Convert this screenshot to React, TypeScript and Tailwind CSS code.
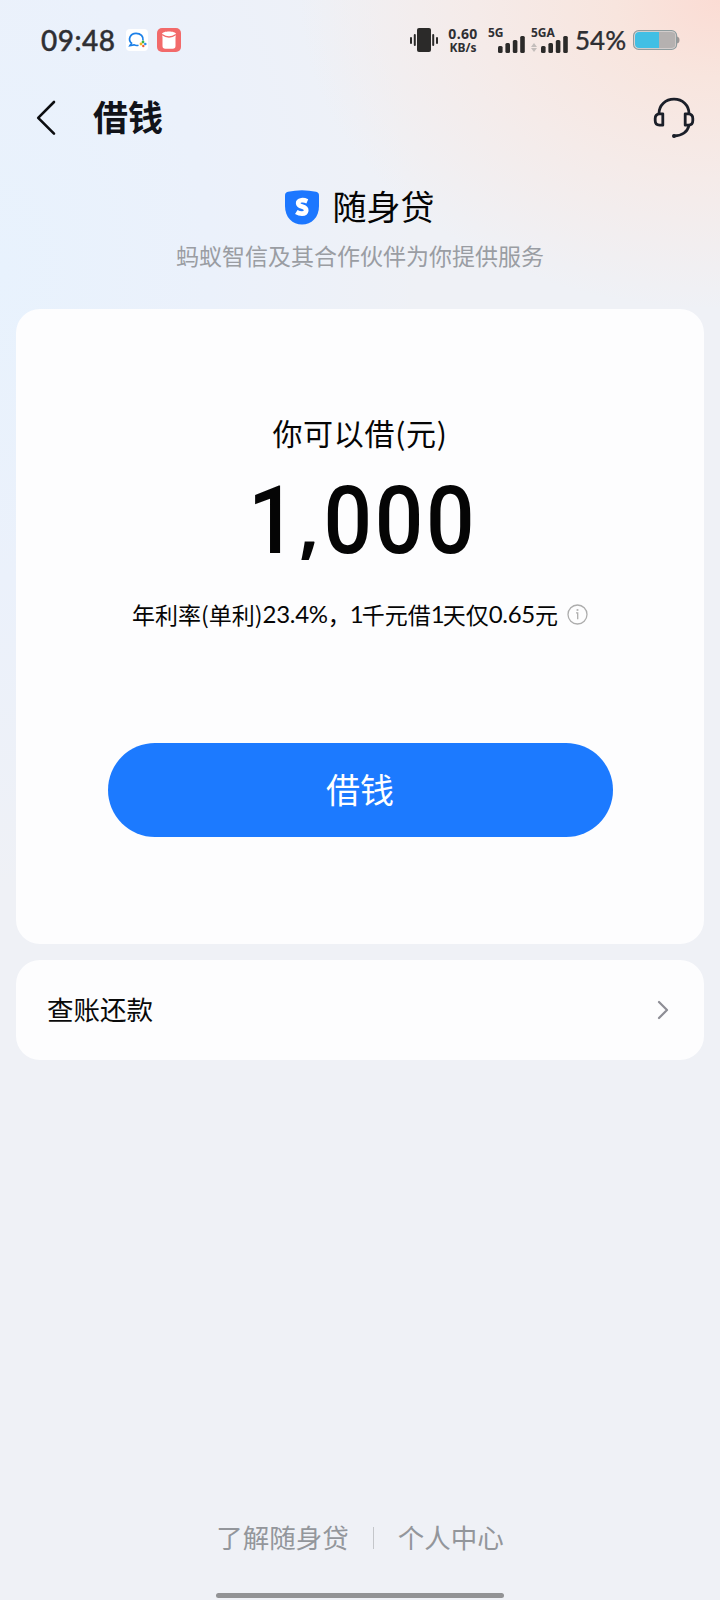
import React from "react";

function Signal() {
  return (
    <svg width="28" height="17" viewBox="0 0 28 17" fill="#2b2a29">
      <rect x="0" y="10" width="4.6" height="7" rx="1.5" />
      <rect x="7.4" y="7" width="4.6" height="10" rx="1.5" />
      <rect x="14.8" y="4" width="4.6" height="13" rx="1.5" />
      <rect x="22.2" y="0" width="4.6" height="17" rx="1.5" />
    </svg>
  );
}

function StatusBar() {
  return (
    <div className="flex h-20 items-center pl-[41px] font-['Lato',sans-serif] text-[#2f2f33]">
      <div className="w-[75px] text-[28px] font-medium leading-none tracking-[0.5px] [-webkit-text-stroke:0.4px_#2f2f33]">09:48</div>
      <svg className="ml-[10px]" width="22" height="22" viewBox="0 0 22 22">
        <rect width="22" height="22" rx="4" fill="#fff" />
        <path d="M12.500 16.200c-1.600.5-3.200.3-4.600-.4L4 16.600l1.500-2.400C1.500 10.500 4.200 4.300 10 4.300c4.800 0 7.600 3.300 7 7" fill="none" stroke="#1c80e8" strokeWidth="1.700" />
        <circle cx="17" cy="13" r="1.400" fill="#37b44a" />
        <circle cx="19.300" cy="15" r="1.300" fill="#2a8cf0" />
        <circle cx="15" cy="15" r="1.400" fill="#f3b51e" />
        <circle cx="17.300" cy="17" r="1.200" fill="#ef5a32" />
      </svg>
      <svg className="ml-[9px]" width="24" height="24" viewBox="0 0 24 24">
        <rect width="24" height="24" rx="5" fill="#f26a6a" />
        <path d="M5 6C5 2.500 19 2.500 19 6L18.500 9.500v8.500q0 2.800-2.800 2.800H8.300Q5.500 20.800 5.500 18v-8.500z" fill="#fff" />
        <path d="M5 6.500q7 5 14 0" fill="none" stroke="#f26a6a" strokeWidth="1.500" />
      </svg>
      <svg className="ml-[229px]" width="28" height="24" viewBox="0 0 28 24" fill="#2b2a29">
        <rect x="7" y="0" width="14" height="24" rx="2" />
        <rect x="0" y="9" width="2" height="7" rx="1" />
        <rect x="3.800" y="6" width="2" height="12" rx="1" />
        <rect x="22.200" y="6" width="2" height="12" rx="1" />
        <rect x="26" y="9" width="2" height="7" rx="1" />
      </svg>
      <div className="ml-[8px] w-[34px] text-center font-['Noto_Sans',sans-serif] font-bold">
        <div className="whitespace-nowrap text-[14px] leading-[15px] tracking-[0.4px]">0.60</div>
        <div className="whitespace-nowrap text-[12px] leading-[14px]">KB/s</div>
      </div>
      <div className="ml-[8px] flex h-[24px] w-[43px] flex-col justify-between font-['Noto_Sans',sans-serif] text-[12px] font-bold leading-[9px]">
        <div>5G</div>
        <div className="-mt-[1.500px] flex justify-start pl-[10px]">
          <Signal />
        </div>
      </div>
      <div className="flex h-[24px] w-[39px] flex-col justify-between font-['Noto_Sans',sans-serif] text-[12px] font-bold leading-[9px]">
        <div>5GA</div>
        <div className="-mt-[1.500px] flex items-end gap-[4px]">
          <svg className="mb-[1px]" width="6" height="9" viewBox="0 0 6 9" fill="#c3bdbb">
            <path d="M3 0l3 4H0zM3 9l3-4H0z" />
          </svg>
          <Signal />
        </div>
      </div>
      <div className="ml-[5px] w-[52px] text-[26px] font-medium leading-none [-webkit-text-stroke:0.2px_#2f2f33]">54%</div>
      <svg className="ml-[6px]" width="47" height="20" viewBox="0 0 47 20">
        <rect x=".6" y=".6" width="43" height="18.800" rx="5" fill="#e9dedb" stroke="#8f9c9e" strokeWidth="1.200" />
        <path d="M26 2h12.500q4 0 4 4v8q0 4-4 4H26z" fill="#b5b1b0" />
        <path d="M26 2H6Q2 2 2 6v8q0 4 4 4h20z" fill="#41bfe4" />
        <path d="M44 6.500q2.500.5 2.500 3.500t-2.500 3.500z" fill="#9b9796" />
      </svg>
    </div>
  );
}

function NavBar() {
  return (
    <div className="flex h-[76px] items-center pl-[36px]">
      <svg width="20" height="36" viewBox="0 0 20 36" fill="none" stroke="#0c0d10" strokeWidth="2.600" strokeLinecap="round" strokeLinejoin="round">
        <path d="M18 2L2.200 17.800L18 33.600" />
      </svg>
      <h1 className="mb-[5px] ml-[37px] text-[35px] font-bold leading-none text-[#11131a]">借钱</h1>
      <svg className="ml-auto mr-[25px]" width="42" height="42" viewBox="0 0 42 42" fill="none" stroke="#1b1f29" strokeWidth="2.800" strokeLinecap="round" strokeLinejoin="round">
        <path d="M6 16.500C6 8 12.500 2.200 21 2.200S36 8 36 16.500" />
        <path d="M9.800 16.800H6.500Q2.200 17 2.200 21.500v2Q2.200 28 6.500 28.200h3.300z" />
        <path d="M32.200 16.800h3.300q4.300.2 4.300 4.700v2q0 4.500-4.300 4.700h-3.300z" />
        <path d="M36 28.500C34.500 34.500 29 38.600 21 39" />
        <circle cx="21" cy="39" r=".6" />
      </svg>
    </div>
  );
}

function Brand() {
  return (
    <div className="flex h-[152.500px] flex-col items-center pt-[31px]">
      <div className="flex h-[40px] items-center pr-[1px]">
        <svg width="34" height="35" viewBox="0 0 34 35">
          <path d="M3 1.800Q17-1.200 31 1.800Q34 2.500 34 5.500V16C34 27.500 26.500 34.500 17 34.500S0 27.500 0 16V5.500Q0 2.500 3 1.800Z" fill="#1c77ff" />
          <path d="M22.300 11.300Q19 9.900 16.400 10.300Q13 10.900 13.200 13.400Q13.400 15.600 17 16.600Q21.400 17.800 21.200 20.600Q20.800 23.500 17 23.600Q14 23.600 11.300 21.900" fill="none" stroke="#fff" strokeWidth="4.700" />
        </svg>
        <div className="mb-[2px] ml-[14px] text-[34px] leading-[40px] text-[#050505]">随身贷</div>
      </div>
      <div className="mt-[12px] text-[23px] leading-[32px] text-[#9a9da3]">蚂蚁智信及其合作伙伴为你提供服务</div>
    </div>
  );
}

function LoanCard() {
  return (
    <section className="mx-4 flex h-[635.500px] flex-col items-center rounded-[24px] bg-[#fdfdfe] text-[#050505]">
      <div className="mt-[103.500px] text-[30px] leading-[40px] tracking-[0.700px]">你可以借(元)</div>
      <div className="mt-[18.500px] flex h-[100px] items-center justify-center pl-[7px]">
        <div className="flex scale-x-90 font-['Roboto',sans-serif] text-[95px] font-medium leading-[101px] tracking-[3px]">
          <span className="-ml-[3px]">1</span>
          <span className="w-[27px] font-['Open_Sans',sans-serif] text-[76px] font-bold tracking-normal">,</span>
          <span>000</span>
        </div>
      </div>
      <div className="mt-[23px] flex h-[40px] items-center text-[23px] leading-[40px]">
        <span>年利率(单利)</span>
        <span className="font-['Lato',sans-serif] text-[24px] tracking-[-0.3px]">23.4%</span>
        <span className="w-[22px]">，</span>
        <span className="w-[12px] font-['Lato',sans-serif] text-[24px]">1</span>
        <span>千元借</span>
        <span className="w-[12px] font-['Lato',sans-serif] text-[24px]">1</span>
        <span>天仅</span>
        <span className="font-['Lato',sans-serif] text-[24px] tracking-[-0.3px]">0.65</span>
        <span>元</span>
        <svg className="ml-[9px] mt-[2px]" width="21" height="21" viewBox="0 0 21 21" fill="none" stroke="#adadad" strokeWidth="1.300">
          <circle cx="10.500" cy="10.500" r="9.500" />
          <path d="M9 8.800h1.700v6.400" />
          <circle cx="10.500" cy="6" r=".4" />
        </svg>
      </div>
      <button className="mt-[109px] h-[94px] w-[505px] rounded-full bg-[#1c7aff] pb-[2px] text-[34px] leading-[92px] text-white">借钱</button>
    </section>
  );
}

export default function App() {
  return (
    <main className="flex h-[1600px] w-[720px] flex-col overflow-hidden bg-[#eff1f6] bg-[radial-gradient(ellipse_420px_310px_at_100%_0%,#fbdcd4_0%,#f8e5de_25%,#f5ebe9_58%,#f1f0f300_100%),radial-gradient(ellipse_420px_620px_at_0%_270px,#e8f2fd_0%,#ebf1fb_50%,#eff1f600_100%)] font-['Noto_Sans_CJK_SC',sans-serif]">
      <StatusBar />
      <NavBar />
      <Brand />
      <LoanCard />
      <button className="mx-4 mt-4 flex h-[100px] items-center justify-between rounded-[24px] bg-[#fdfdfe] pl-[31px] pr-[35px] text-[26.500px] text-[#0a0a0a]">
        <span className="mb-[3px]">查账还款</span>
        <svg width="12" height="20" viewBox="0 0 12 20" fill="none" stroke="#8d8d95" strokeWidth="2.200" strokeLinecap="round" strokeLinejoin="round">
          <path d="M2 2l8 8-8 8" />
        </svg>
      </button>
      <footer className="mt-auto flex flex-col items-center text-[26.500px] text-[#93969b]">
        <div className="flex h-[40px] items-center leading-[40px]">
          <span className="mb-[2px]">了解随身贷</span>
          <span className="ml-[24px] mr-[24px] h-[22px] w-px bg-[#c4c6ca]" />
          <span className="mb-[2px]">个人中心</span>
        </div>
        <div className="mb-[2px] mt-[35px] h-[5px] w-[288px] rounded-full bg-[#929395]" />
      </footer>
    </main>
  );
}
